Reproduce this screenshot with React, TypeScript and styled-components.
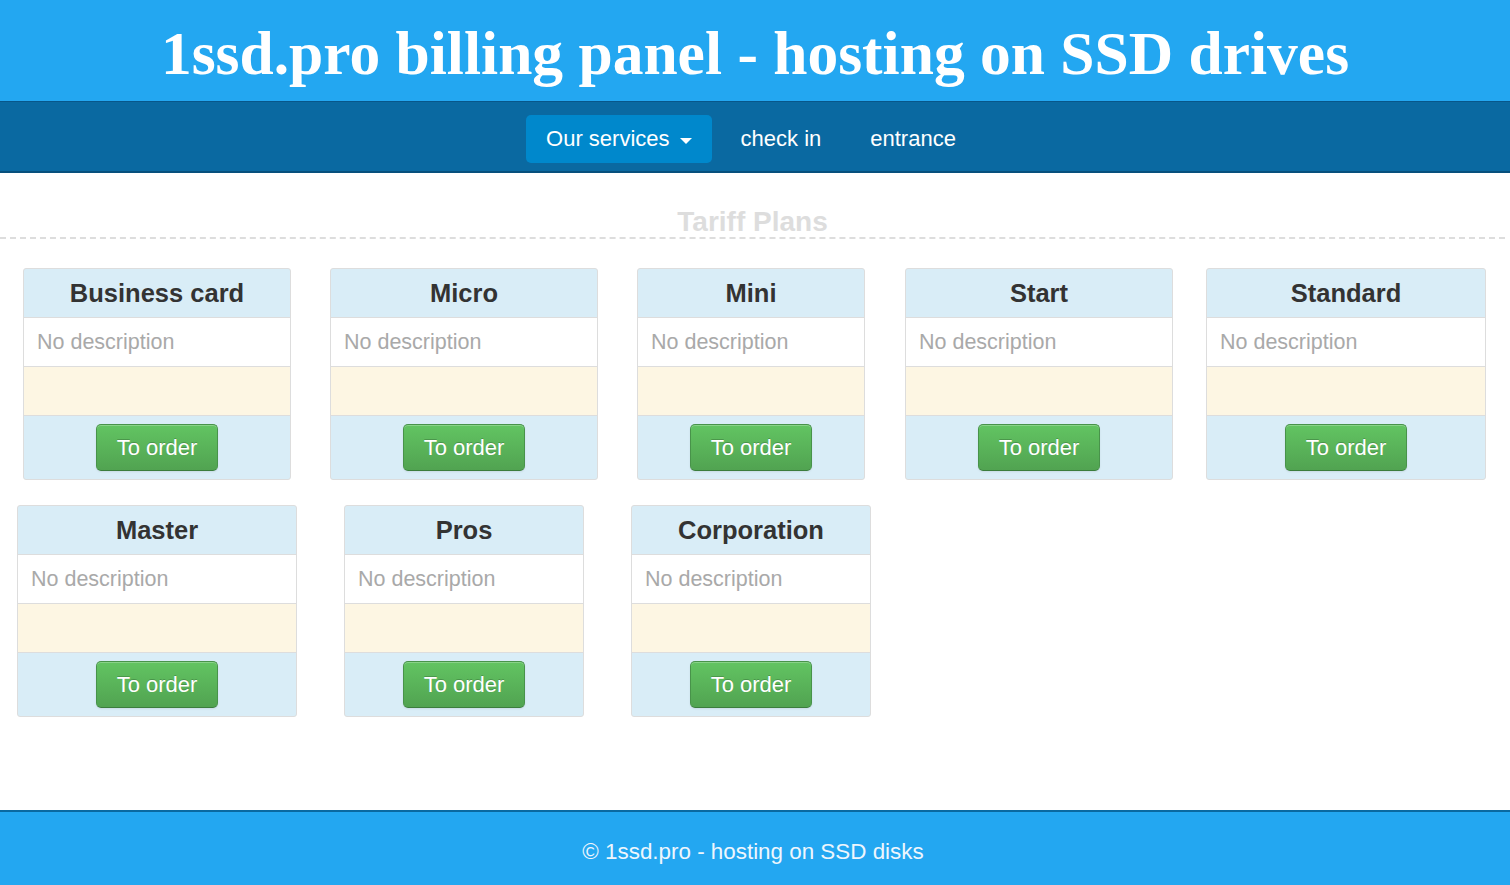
import React from 'react';
import styled, { createGlobalStyle } from 'styled-components';

const GlobalStyle = createGlobalStyle`
  html, body {
    margin: 0;
    padding: 0;
    background: #fff;
    font-family: "Liberation Sans", Arial, sans-serif;
  }
  * {
    box-sizing: border-box;
  }
`;

const Page = styled.div`
  display: flex;
  flex-direction: column;
  min-height: 885px;
`;

const Header = styled.header`
  height: 101px;
  background: #23a7f1;
  display: flex;
  align-items: center;
  justify-content: center;
`;

const SiteTitle = styled.h1`
  margin: 0;
  padding-top: 6px;
  font-family: "Liberation Serif", "Times New Roman", serif;
  font-size: 61.5px;
  font-weight: bold;
  color: #fff;
  line-height: 1;
`;

const Nav = styled.nav`
  height: 72px;
  background: #0a69a1;
  border-top: 1px solid #08578a;
  border-bottom: 2px solid #07507d;
  display: flex;
  justify-content: center;
  align-items: flex-start;
  padding-top: 13px;
  padding-right: 8px;
  gap: 9px;
`;

const NavItem = styled.a<{ $active?: boolean }>`
  display: flex;
  align-items: center;
  height: 48px;
  padding: 0 20px;
  border-radius: 5px;
  color: #fff;
  font-size: 22px;
  text-decoration: none;
  background: ${(p) => (p.$active ? '#0088cc' : 'transparent')};
  cursor: pointer;
`;

const Caret = styled.span`
  display: inline-block;
  width: 0;
  height: 0;
  margin-left: 10px;
  margin-top: 3px;
  border-top: 6px solid #fff;
  border-left: 6px solid transparent;
  border-right: 6px solid transparent;
`;

const Main = styled.main`
  flex: 1;
  padding-top: 34px;
`;

const SectionTitle = styled.h2`
  margin: 0 5px 0 0;
  height: 32px;
  line-height: 30px;
  text-align: center;
  font-size: 28px;
  font-weight: bold;
  color: #dddddd;
  border-bottom: 2px dashed #dddddd;
`;

const PlanGrid = styled.div`
  display: grid;
  grid-template-columns: repeat(5, max-content);
  justify-items: center;
  column-gap: 33px;
  row-gap: 25px;
  padding-left: 17px;
  margin-top: 29px;
`;

const Card = styled.div<{ $width: number; $shift?: number }>`
  width: ${(p) => p.$width}px;
  margin-left: ${(p) => p.$shift ?? 0}px;
  border: 1px solid #dddddd;
  border-radius: 3px;
  overflow: hidden;
  background: #d9edf7;
`;

const CardHead = styled.div`
  height: 49px;
  border-bottom: 1px solid #dddddd;
  display: flex;
  align-items: center;
  justify-content: center;
  font-size: 25.5px;
  font-weight: bold;
  color: #333;
`;

const CardDesc = styled.div`
  height: 49px;
  border-bottom: 1px solid #dddddd;
  background: #fff;
  display: flex;
  align-items: center;
  padding-left: 13px;
  font-size: 21.5px;
  color: #a9a9a9;
`;

const CardPrice = styled.div`
  height: 49px;
  border-bottom: 1px solid #dddddd;
  background: #fdf6e3;
`;

const CardFoot = styled.div`
  height: 63px;
  display: flex;
  justify-content: center;
  align-items: center;
`;

const OrderButton = styled.button`
  height: 47px;
  padding: 0 20px;
  font-family: "Liberation Sans", Arial, sans-serif;
  font-size: 22px;
  color: #fff;
  text-shadow: 0 -1px 0 rgba(0, 0, 0, 0.2);
  background: linear-gradient(to bottom, #62c462, #51a351);
  border: 1px solid #48934a;
  border-bottom-color: #3b7d3d;
  border-radius: 5px;
  box-shadow: inset 0 1px 0 rgba(255, 255, 255, 0.25), 0 1px 2px rgba(0, 0, 0, 0.08);
  cursor: pointer;
`;

const Footer = styled.footer`
  height: 75px;
  background: #23a7f1;
  border-top: 2px solid #0a69a1;
  display: flex;
  align-items: center;
  justify-content: center;
  padding-top: 6px;
  padding-right: 4px;
  color: #eef6fd;
  font-size: 22.4px;
`;

type Plan = { name: string; width: number; shift?: number };

const plans: Plan[] = [
  { name: 'Business card', width: 268 },
  { name: 'Micro', width: 268 },
  { name: 'Mini', width: 228 },
  { name: 'Start', width: 268, shift: 1 },
  { name: 'Standard', width: 280 },
  { name: 'Master', width: 280 },
  { name: 'Pros', width: 240 },
  { name: 'Corporation', width: 240 },
];

const PlanCard: React.FC<{ plan: Plan }> = ({ plan }) => (
  <Card $width={plan.width} $shift={plan.shift}>
    <CardHead>{plan.name}</CardHead>
    <CardDesc>No description</CardDesc>
    <CardPrice />
    <CardFoot>
      <OrderButton>To order</OrderButton>
    </CardFoot>
  </Card>
);

const App: React.FC = () => (
  <Page>
    <GlobalStyle />
    <Header>
      <SiteTitle>1ssd.pro billing panel - hosting on SSD drives</SiteTitle>
    </Header>
    <Nav>
      <NavItem $active>
        Our services
        <Caret />
      </NavItem>
      <NavItem>check in</NavItem>
      <NavItem>entrance</NavItem>
    </Nav>
    <Main>
      <SectionTitle>Tariff Plans</SectionTitle>
      <PlanGrid>
        {plans.map((p) => (
          <PlanCard key={p.name} plan={p} />
        ))}
      </PlanGrid>
    </Main>
    <Footer>© 1ssd.pro - hosting on SSD disks</Footer>
  </Page>
);

export default App;
